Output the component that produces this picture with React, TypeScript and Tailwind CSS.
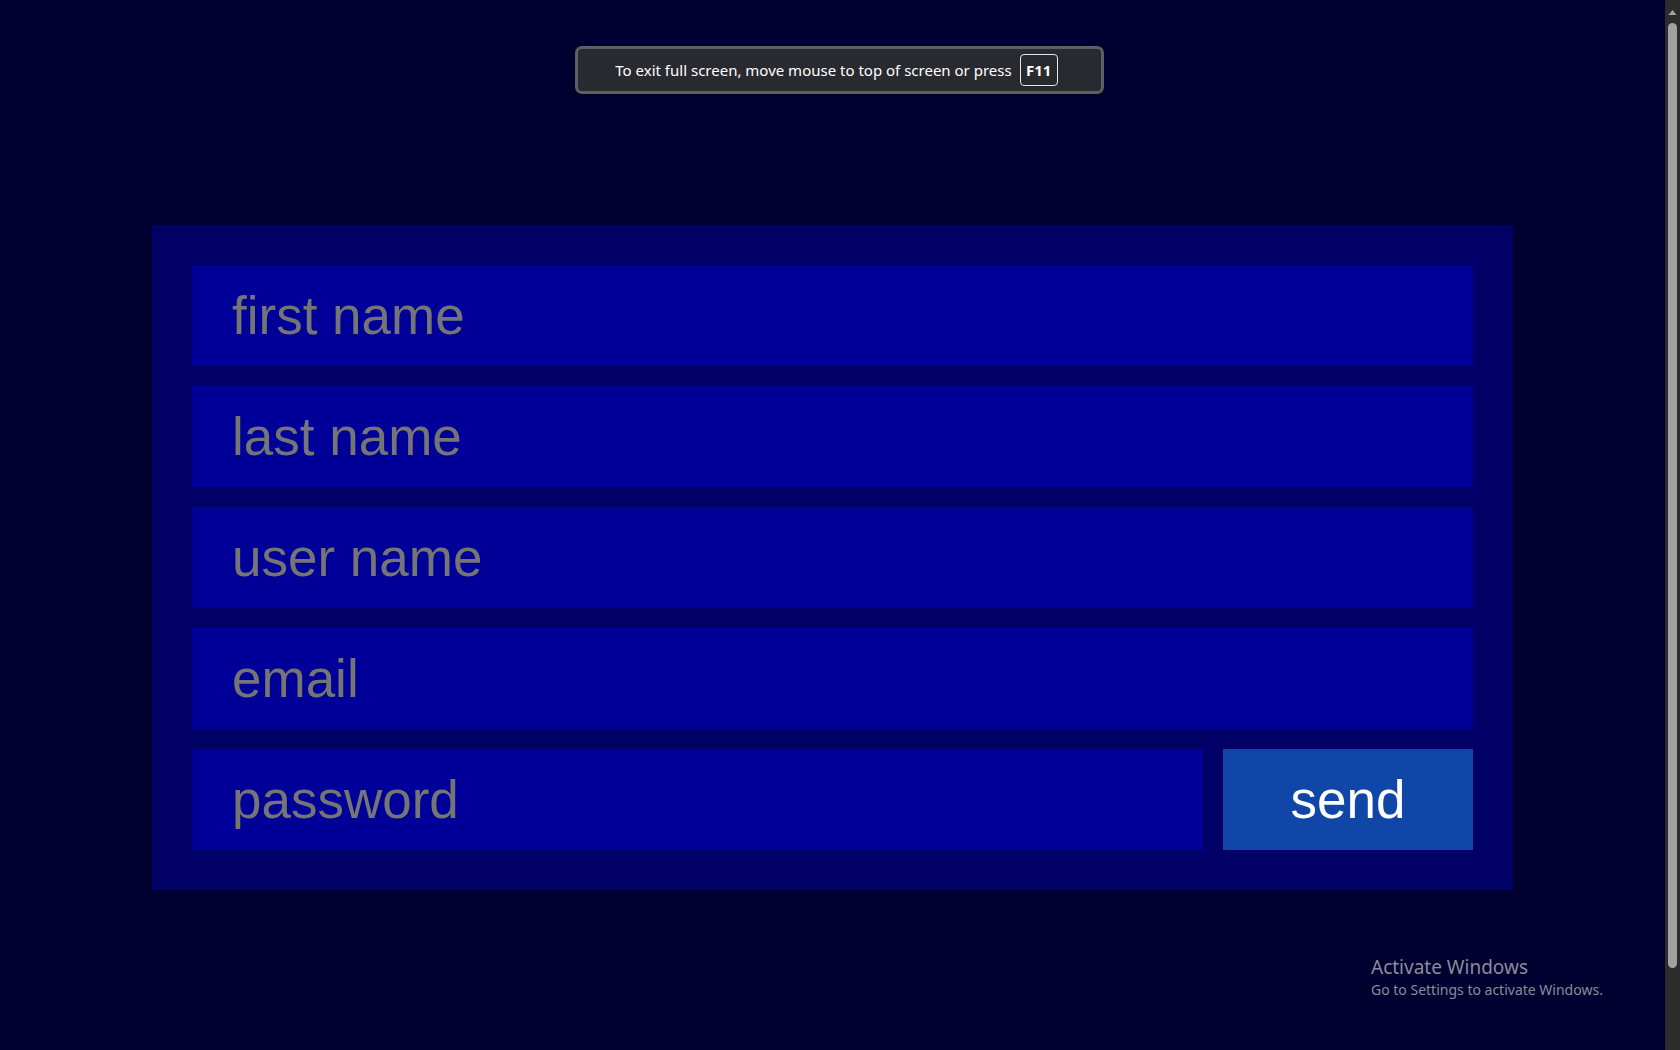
import React from "react";

const fields = ["first name", "last name", "user name", "email"];

export default function App() {
  return (
    <div className="relative flex h-[1050px] w-[1680px] overflow-hidden bg-[#000030]">
      <div className="relative flex flex-1 flex-col items-center pt-[225px]">
        <div className="flex w-[1361px] flex-col gap-[20px] bg-[#000066] p-[40px]">
          {fields.map((f) => (
            <div
              key={f}
              className="flex h-[101px] items-center bg-[#000099] pl-[40px] font-['Liberation_Sans',Arial,sans-serif] text-[53px] leading-none text-[#757575]"
            >
              {f}
            </div>
          ))}
          <div className="flex h-[101px] gap-[20px]">
            <div className="flex flex-1 items-center bg-[#000099] pl-[40px] font-['Liberation_Sans',Arial,sans-serif] text-[53px] leading-none text-[#757575]">
              password
            </div>
            <div className="flex w-[250px] items-center justify-center bg-[#1146a9] font-['Liberation_Sans',Arial,sans-serif] text-[53px] leading-none text-white">
              send
            </div>
          </div>
        </div>

        <div className="absolute left-[575px] top-[46px] flex h-[48px] w-[529px] items-center justify-center rounded-[7px] border-[3px] border-[#5e5f62] bg-[#292a2f] pr-[6px]">
          <span className="font-['Noto_Sans','Open_Sans',sans-serif] text-[15px] text-white">
            To exit full screen, move mouse to top of screen or press
          </span>
          <span className="ml-[8px] flex h-[32px] w-[38px] items-center justify-center rounded-[4px] border border-[#e8e8e8] font-['Noto_Sans','Open_Sans',sans-serif] text-[15px] font-bold text-white">
            F11
          </span>
        </div>

        <div className="absolute left-[1371px] top-[955px] flex flex-col font-['Noto_Sans','Open_Sans',sans-serif] text-[#8c8c98]">
          <span className="text-[19px] leading-[24px]">Activate Windows</span>
          <span className="text-[14px] leading-[21px]">Go to Settings to activate Windows.</span>
        </div>
      </div>

      <div className="flex h-full w-[15px] flex-col items-center bg-[#2c2c2c]">
        <svg width="9" height="17" viewBox="0 0 9 17">
          <polygon points="0.5,15 4.5,10 8.5,15" fill="#a3a3a3" />
        </svg>
        <div className="mt-[6px] w-[9px] flex-1 rounded-full bg-[#a0a0a0]" />
        <div className="h-[82px]" />
      </div>
    </div>
  );
}
